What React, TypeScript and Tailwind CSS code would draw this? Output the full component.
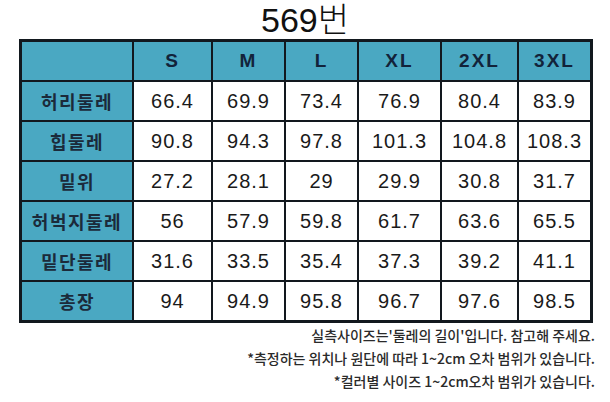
import React from 'react';

const SIZES = ['S', 'M', 'L', 'XL', '2XL', '3XL'];

const ROWS: { label: string; values: string[] }[] = [
  { label: '허리둘레', values: ['66.4', '69.9', '73.4', '76.9', '80.4', '83.9'] },
  { label: '힙둘레', values: ['90.8', '94.3', '97.8', '101.3', '104.8', '108.3'] },
  { label: '밑위', values: ['27.2', '28.1', '29', '29.9', '30.8', '31.7'] },
  { label: '허벅지둘레', values: ['56', '57.9', '59.8', '61.7', '63.6', '65.5'] },
  { label: '밑단둘레', values: ['31.6', '33.5', '35.4', '37.3', '39.2', '41.1'] },
  { label: '총장', values: ['94', '94.9', '95.8', '96.7', '97.6', '98.5'] },
];

const NOTES = [
  "실측사이즈는'둘레의 길이'입니다. 참고해 주세요.",
  '*측정하는 위치나 원단에 따라 1~2cm 오차 범위가 있습니다.',
  '*컬러별 사이즈 1~2cm오차 범위가 있습니다.',
];

export default function App() {
  return (
    <div className="w-[610px] h-[402px] bg-white overflow-hidden font-['Liberation_Sans','Noto_Sans_CJK_KR',sans-serif]">
      {/* Title */}
      <div className="h-[39px] flex items-center justify-center">
        <span className="text-[34px] leading-none font-light text-[#111] font-['Liberation_Sans','Noto_Sans_CJK_KR',sans-serif]">
          569번
        </span>
      </div>

      {/* Size table */}
      <div className="ml-[19px] w-[574px] border-[3px] border-[#12181e] bg-[#12181e] grid grid-cols-[110px_77px_71px_71px_81px_75px_71px] auto-rows-[38px] gap-[2px]">
        <div className="bg-[#4aa8c2]" />
        {SIZES.map((s) => (
          <div
            key={s}
            className="bg-[#4aa8c2] flex items-center justify-center text-[19px] font-bold tracking-[2px] text-[#12233a]"
          >
            {s}
          </div>
        ))}

        {ROWS.map((row) => (
          <React.Fragment key={row.label}>
            <div className="bg-[#4aa8c2] flex items-center justify-center text-[18px] font-bold tracking-[1.5px] text-[#1b2a3a] font-['Noto_Sans_CJK_KR',sans-serif]">
              {row.label}
            </div>
            {row.values.map((v, i) => (
              <div
                key={i}
                className="bg-white flex items-center justify-center text-[20px] tracking-[1px] text-[#1a1a1a]"
              >
                {v}
              </div>
            ))}
          </React.Fragment>
        ))}
      </div>

      {/* Notes */}
      <div className="pt-px pr-[15px] flex flex-col items-end">
        {NOTES.map((n) => (
          <p
            key={n}
            className="text-[14px] leading-[23px] font-medium text-[#2a2a2a] font-['Noto_Sans_CJK_KR',sans-serif]"
          >
            {n}
          </p>
        ))}
      </div>
    </div>
  );
}
